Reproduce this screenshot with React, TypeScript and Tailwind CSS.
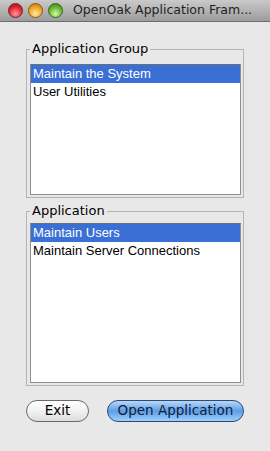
import React from "react";

const font = { fontFamily: '"DejaVu Sans", "Liberation Sans", sans-serif' };
const listFont = { fontFamily: '"Liberation Sans", Arial, sans-serif' };

const Light = ({ bg, ring }: { bg: string; ring: string }) => (
  <div className={`w-[15px] h-[15px] shrink-0 rounded-full border ${ring} ${bg}`} />
);

const ListBox = ({
  items,
  selected,
  height,
}: {
  items: string[];
  selected: number;
  height: string;
}) => (
  <div className={`${height} bg-white border border-[#8e8e8e] border-t-[#6f6f6f]`} style={listFont}>
    {items.map((it, i) => (
      <div
        key={it}
        className={`h-[18px] pl-[2px] text-[13px] leading-[18px] whitespace-nowrap ${
          i === selected ? "bg-[#3a6fd6] text-white" : "text-black"
        }`}
      >
        {it}
      </div>
    ))}
  </div>
);

export default function App() {
  return (
    <div className="w-[270px] h-[451px] bg-[#e8e8e8] flex flex-col" style={font}>
      <div className="h-[22px] flex items-center bg-gradient-to-b from-[#cacaca] to-[#9c9c9c] border-b border-[#6e6e6e]">
        <div className="flex gap-[5px] pl-[8px]">
          <Light
            bg="bg-[radial-gradient(circle_at_50%_75%,#ff9a9a,#e0202c_60%,#a01018)]"
            ring="border-[#7a2020]"
          />
          <Light
            bg="bg-[radial-gradient(circle_at_50%_75%,#ffe9a0,#f0a020_60%,#b06a10)]"
            ring="border-[#8a5a14]"
          />
          <Light
            bg="bg-[radial-gradient(circle_at_50%_75%,#d8f8a0,#60b030_60%,#3a7a18)]"
            ring="border-[#2e6a1a]"
          />
        </div>
        <div className="ml-[10px] text-[12.5px] text-[#1e1e1e] whitespace-nowrap">
          OpenOak Application Fram...
        </div>
      </div>

      <div className="px-[26px] pt-[20px] flex flex-col">
        <fieldset className="border border-[#b4b4b4] px-[3px] pb-[2px] pr-[2px]">
          <legend className="px-[2px] text-[13px] leading-[14px] text-black">
            Application Group
          </legend>
          <div className="mt-[8px]">
            <ListBox
              items={["Maintain the System", "User Utilities"]}
              selected={0}
              height="h-[131px]"
            />
          </div>
        </fieldset>

        <fieldset className="mt-[6px] border border-[#b4b4b4] px-[3px] pb-[2px] pr-[2px]">
          <legend className="px-[2px] text-[13px] leading-[14px] text-black">
            Application
          </legend>
          <div className="mt-[5px]">
            <ListBox
              items={["Maintain Users", "Maintain Server Connections"]}
              selected={0}
              height="h-[160px]"
            />
          </div>
        </fieldset>

        <div className="mt-[14px] flex">
          <button className="w-[63px] h-[22px] rounded-full border border-[#6a6a6a] bg-gradient-to-b from-[#ffffff] via-[#f2f2f2] to-[#dcdcdc] text-[13.5px] text-black leading-none">
            Exit
          </button>
          <button className="ml-[18px] w-[137px] h-[22px] rounded-full border border-[#2a4a7a] bg-gradient-to-b from-[#b8d8f8] via-[#5d9de6] to-[#9fd0fa] text-[13.5px] text-[#0e1e3a] leading-none">
            Open Application
          </button>
        </div>
      </div>
    </div>
  );
}
